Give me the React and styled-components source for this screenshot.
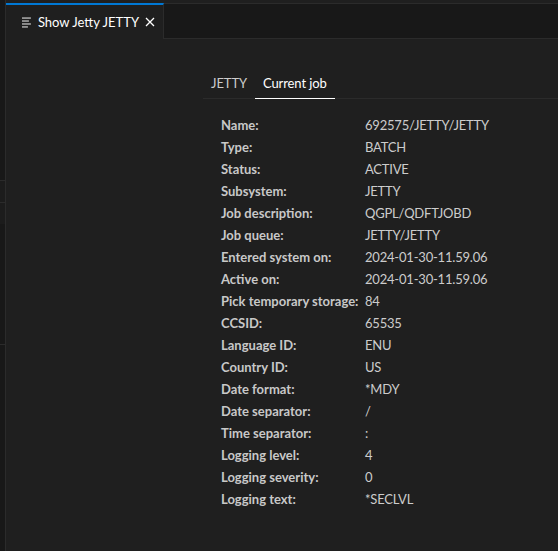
import { Fragment } from "react";
import styled, { createGlobalStyle } from "styled-components";

const GlobalStyle = createGlobalStyle`
  html, body {
    margin: 0;
    padding: 0;
    background: #1f1f1f;
    height: 100%;
  }
  #root {
    height: 100%;
  }
  * {
    box-sizing: border-box;
  }
`;

const Window = styled.div`
  display: flex;
  width: 558px;
  height: 551px;
  overflow: hidden;
  font-family: Lato, "Noto Sans", sans-serif;
  font-size: 13px;
  color: #cccccc;
  background: #1f1f1f;
`;

const SideStrip = styled.div`
  width: 6px;
  flex-shrink: 0;
  display: flex;
  flex-direction: column;
  background: #181818;
  border-right: 1px solid #2b2b2b;
`;

const StripPart = styled.div`
  height: ${(p) => p.h}px;
  flex-shrink: 0;
  border-bottom: ${(p) => (p.line ? "1px solid #2b2b2b" : "none")};
  background: ${(p) => p.bg || "#181818"};
`;

const Editor = styled.div`
  flex: 1;
  display: flex;
  flex-direction: column;
  min-width: 0;
`;

const TabBar = styled.div`
  height: 36px;
  display: flex;
  background: #181818;
  border-top: 1px solid #2b2b2b;
  margin-top: 3px;
`;

const EditorTab = styled.div`
  display: flex;
  align-items: center;
  gap: 6px;
  padding: 0 8px 0 16px;
  width: 158px;
  margin-top: -1px;
  background: #1f1f1f;
  border-top: 2px solid #0078d4;
  border-right: 1px solid #2b2b2b;
  color: #ffffff;
  white-space: nowrap;
`;

const TabFiller = styled.div`
  flex: 1;
  border-bottom: 1px solid #2b2b2b;
`;

const TabLabel = styled.span`
  flex: 1;
`;

const Close = styled.span`
  display: flex;
  align-items: center;
`;

const Body = styled.div`
  flex: 1;
  padding: 30px 0 0 197px;
`;

const PanelTabs = styled.div`
  display: flex;
  border-bottom: 1px solid #2b2b2b;
  margin-right: -20px;
`;

const PanelTab = styled.div`
  padding: 5px 8px 6px;
  line-height: 18px;
  letter-spacing: -0.1px;
  color: ${(p) => (p.active ? "#ffffff" : "#cccccc")};
  border-bottom: 1px solid ${(p) => (p.active ? "#ffffff" : "transparent")};
  margin-bottom: -1px;
`;

const Details = styled.div`
  display: grid;
  grid-template-columns: 144px auto;
  padding: 15px 0 0 18px;
  line-height: 22px;
`;

const Label = styled.div`
  font-weight: 700;
  color: #c8c8c8;
  white-space: nowrap;
`;

const Value = styled.div`
  color: #cccccc;
  letter-spacing: -0.2px;
  white-space: nowrap;
`;

const rows = [
  ["Name:", "692575/JETTY/JETTY"],
  ["Type:", "BATCH"],
  ["Status:", "ACTIVE"],
  ["Subsystem:", "JETTY"],
  ["Job description:", "QGPL/QDFTJOBD"],
  ["Job queue:", "JETTY/JETTY"],
  ["Entered system on:", "2024-01-30-11.59.06"],
  ["Active on:", "2024-01-30-11.59.06"],
  ["Pick temporary storage:", "84"],
  ["CCSID:", "65535"],
  ["Language ID:", "ENU"],
  ["Country ID:", "US"],
  ["Date format:", "*MDY"],
  ["Date separator:", "/"],
  ["Time separator:", ":"],
  ["Logging level:", "4"],
  ["Logging severity:", "0"],
  ["Logging text:", "*SECLVL"],
];

function PreviewIcon() {
  return (
    <svg width="10" height="11" viewBox="0 0 10 11">
      <g stroke="#c5c5c5" strokeWidth="1.3">
        <line x1="0" y1="1" x2="9" y2="1" />
        <line x1="0" y1="4" x2="7" y2="4" />
        <line x1="0" y1="7" x2="9" y2="7" />
        <line x1="0" y1="10" x2="6" y2="10" />
      </g>
    </svg>
  );
}

function CloseIcon() {
  return (
    <svg width="10" height="10" viewBox="0 0 10 10">
      <path d="M1 1 L9 9 M9 1 L1 9" stroke="#ffffff" strokeWidth="1.3" />
    </svg>
  );
}

export default function App() {
  return (
    <>
      <GlobalStyle />
      <Window>
        <SideStrip>
          <StripPart h={181} line />
          <StripPart h={22} line bg="#1c1c1c" />
          <StripPart h={21} bg="#1c1c1c" />
          <StripPart h={121} line />
          <StripPart h={206} />
        </SideStrip>
        <Editor>
          <TabBar>
            <EditorTab>
              <PreviewIcon />
              <TabLabel>Show Jetty JETTY</TabLabel>
              <Close>
                <CloseIcon />
              </Close>
            </EditorTab>
            <TabFiller />
          </TabBar>
          <Body>
            <PanelTabs>
              <PanelTab>JETTY</PanelTab>
              <PanelTab active>Current job</PanelTab>
            </PanelTabs>
            <Details>
              {rows.map(([label, value]) => (
                <Fragment key={label}>
                  <Label>{label}</Label>
                  <Value>{value}</Value>
                </Fragment>
              ))}
            </Details>
          </Body>
        </Editor>
      </Window>
    </>
  );
}
